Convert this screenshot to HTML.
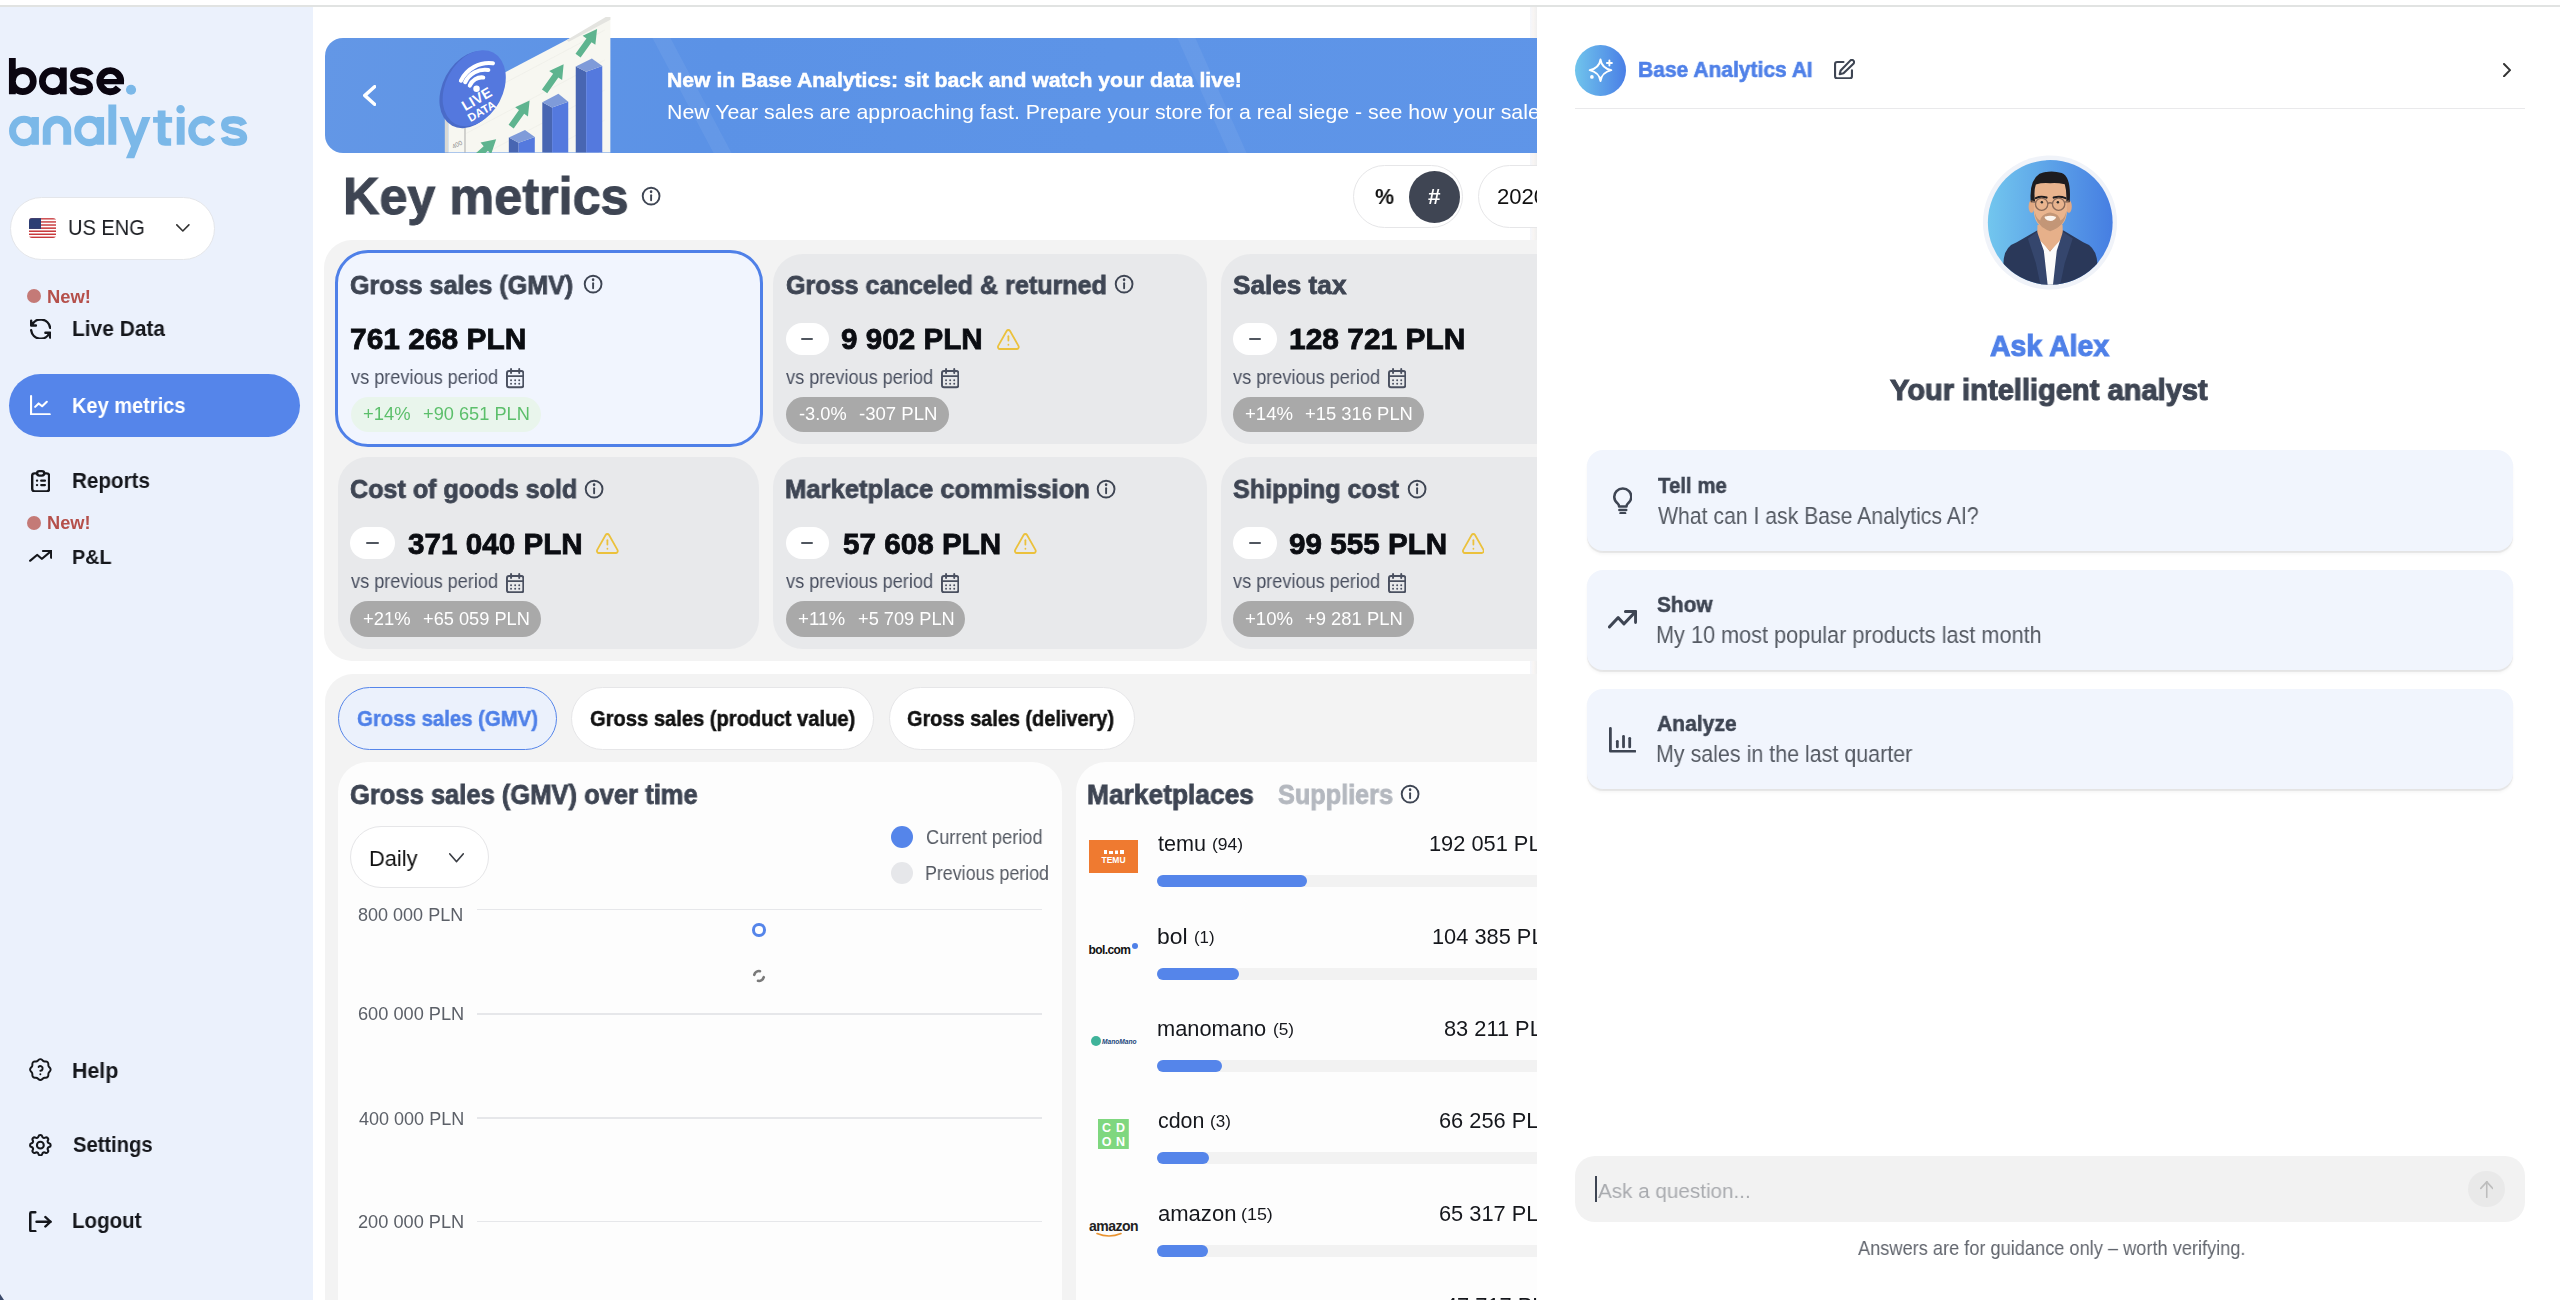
<!DOCTYPE html>
<html><head><meta charset="utf-8"><title>Base Analytics</title>
<style>
html,body{margin:0;padding:0;width:2560px;height:1300px;overflow:hidden;background:#fff;font-family:"Liberation Sans",sans-serif;}
.b{position:absolute;box-sizing:border-box;}
.t{position:absolute;white-space:nowrap;line-height:1;transform-origin:0 0;will-change:transform;}
.clipmain{position:absolute;left:0;top:0;width:1537px;height:1300px;overflow:hidden;}
</style></head><body>
<div class="b" style="left:0px;top:5px;width:2560px;height:2px;background:#e1e3e2"></div>
<div class="b" style="left:0px;top:7px;width:312.5px;height:1293px;background:#ebf1fc"></div>
<svg class="b" style="left:0;top:40px" width="260" height="130" viewBox="0 0 2560 1280"><path d="M88 178H155V535H88z M89 405 a136 137 0 1 1 272 0 a136 137 0 1 1 -272 0z M155 405 a70 71 0 1 0 140 0 a70 71 0 1 0 -140 0z M384 405 a136 137 0 1 1 272 0 a136 137 0 1 1 -272 0z M450 405 a70 71 0 1 0 140 0 a70 71 0 1 0 -140 0z M590 270H657V535H590z " fill="#0a0510" fill-rule="nonzero"/><path d="M892 345 Q872 300 803 300 Q722 300 722 352 Q722 392 800 404 Q885 418 885 470 Q885 512 803 512 Q728 512 712 462" fill="none" stroke="#0a0510" stroke-width="64"/><path d="M1189.0 406.0 A103 104 0 1 0 1167.2 469.4" fill="none" stroke="#0a0510" stroke-width="67"/><path d="M1010 384H1221V436H1010z " fill="#0a0510"/><path d="M1240 490 a50 50 0 1 1 100 0 a50 50 0 1 1 -100 0z " fill="#7bb8e8"/><path d="M89 895 a147 150 0 1 1 294 0 a147 150 0 1 1 -294 0z M158 895 a78 80 0 1 0 156 0 a78 80 0 1 0 -156 0z M310 758H383V1032H310z M731 895 a147 150 0 1 1 294 0 a147 150 0 1 1 -294 0z M800 895 a78 80 0 1 0 156 0 a78 80 0 1 0 -156 0z M952 758H1025V1032H952z M1067 635H1145V1032H1067z M1178 758 L1262 758 L1332 945 L1400 758 L1482 758 L1322 1165 L1240 1165 L1290 1045z M1553 695 H1630 V758 H1695 V815 H1630 V950 Q1630 968 1648 968 H1685 V1040 H1625 Q1553 1040 1553 975 V815 H1507 V758 H1553 Z M1740 758H1818V1032H1740z M1736 682 a42 42 0 1 1 84 0 a42 42 0 1 1 -84 0z " fill="#7bb8e8"/><path d="M460 1032 V885 A101 101 0 0 1 662 885 V1032" fill="none" stroke="#7bb8e8" stroke-width="78"/><path d="M2089.0 830.3 A110 112 0 1 0 2089.0 959.7" fill="none" stroke="#7bb8e8" stroke-width="72"/><path d="M2400 835 Q2380 785 2300 785 Q2212 785 2212 840 Q2212 885 2300 898 Q2398 912 2398 963 Q2398 1008 2305 1008 Q2222 1008 2208 955" fill="none" stroke="#7bb8e8" stroke-width="72"/></svg>
<div class="b" style="left:9.5px;top:196.5px;width:205px;height:63px;background:#fff;border:1.5px solid #e4e6ea;border-radius:32px"></div>
<svg class="b" style="left:29px;top:217.5px;border-radius:3px;overflow:hidden" width="27" height="20.3" viewBox="0 0 27 20"><rect x="0" y="0" width="27" height="1.59" fill="#c8393c"/><rect x="0" y="1.54" width="27" height="1.59" fill="#fff"/><rect x="0" y="3.08" width="27" height="1.59" fill="#c8393c"/><rect x="0" y="4.62" width="27" height="1.59" fill="#fff"/><rect x="0" y="6.15" width="27" height="1.59" fill="#c8393c"/><rect x="0" y="7.69" width="27" height="1.59" fill="#fff"/><rect x="0" y="9.23" width="27" height="1.59" fill="#c8393c"/><rect x="0" y="10.77" width="27" height="1.59" fill="#fff"/><rect x="0" y="12.31" width="27" height="1.59" fill="#c8393c"/><rect x="0" y="13.85" width="27" height="1.59" fill="#fff"/><rect x="0" y="15.38" width="27" height="1.59" fill="#c8393c"/><rect x="0" y="16.92" width="27" height="1.59" fill="#fff"/><rect x="0" y="18.46" width="27" height="1.59" fill="#c8393c"/><rect x="0" y="0" width="12" height="10.77" fill="#2c3e74"/></svg>
<svg class="b" style="left:175.9px;top:223.8px" width="13.7" height="7.8" viewBox="5.2 8.2 13.6 7.6" preserveAspectRatio="none" fill="none" stroke="#333" stroke-width="1.6" stroke-linecap="round" stroke-linejoin="round"><path d="M6 9l6 6l6 -6"/></svg>
<div class="b" style="left:27.3px;top:289.4px;width:14px;height:14px;border-radius:50%;background:#c47a77"></div>
<svg class="b" style="left:30px;top:319.3px" width="21.3" height="20.2" viewBox="3 3.6 18 16.8" preserveAspectRatio="none" fill="none" stroke="#15171c" stroke-width="2" stroke-linecap="round" stroke-linejoin="round"><path d="M20 11a8.1 8.1 0 0 0 -15.5 -2m-.5 -4v4h4"/><path d="M4 13a8.1 8.1 0 0 0 15.5 2m.5 4v-4h-4"/></svg>
<div class="b" style="left:9px;top:373.5px;width:291px;height:63.5px;background:#5585ea;border-radius:32px"></div>
<svg class="b" style="left:30px;top:394.7px" width="20.8" height="20.3" viewBox="3.1 3.1 17.8 17.8" preserveAspectRatio="none" fill="none" stroke="#fff" stroke-width="1.8" stroke-linecap="round" stroke-linejoin="round"><path d="M4 4v16h16"/><path d="M7.5 13.5l3 -3l3 2.5l4 -4"/></svg>
<svg class="b" style="left:31px;top:469.6px" width="19.3" height="22.4" viewBox="4 2 16 20" preserveAspectRatio="none" fill="none" stroke="#15171c" stroke-width="2" stroke-linecap="round" stroke-linejoin="round"><path d="M9 5h-2a2 2 0 0 0 -2 2v12a2 2 0 0 0 2 2h10a2 2 0 0 0 2 -2v-12a2 2 0 0 0 -2 -2h-2"/><path d="M9 5a2 2 0 0 1 2 -2h2a2 2 0 0 1 2 2v0a2 2 0 0 1 -2 2h-2a2 2 0 0 1 -2 -2z"/><path d="M9 11.5l.01 0"/><path d="M12.5 11.5l3 0"/><path d="M9 15.5l.01 0"/><path d="M12.5 15.5l3 0"/></svg>
<div class="b" style="left:26.8px;top:516.3px;width:14px;height:14px;border-radius:50%;background:#c47a77"></div>
<svg class="b" style="left:29.1px;top:550.4px" width="23.4" height="11.8" viewBox="2 6 20 12" preserveAspectRatio="none" fill="none" stroke="#15171c" stroke-width="2" stroke-linecap="round" stroke-linejoin="round"><path d="M3 17l6 -6l4 4l8 -8"/><path d="M14 7l7 0l0 7"/></svg>
<svg class="b" style="left:29px;top:1058.3px" width="22.7" height="23.1" viewBox="2.05 2.05 19.9 19.9" preserveAspectRatio="none" fill="none" stroke="#15171c" stroke-width="1.7" stroke-linecap="round" stroke-linejoin="round"><path d="M5 7.2a2.2 2.2 0 0 1 2.2 -2.2h1a2.2 2.2 0 0 0 1.55 -.64l.7 -.7a2.2 2.2 0 0 1 3.12 0l.7 .7c.412 .41 .97 .64 1.55 .64h1a2.2 2.2 0 0 1 2.2 2.2v1c0 .58 .23 1.138 .64 1.55l.7 .7a2.2 2.2 0 0 1 0 3.12l-.7 .7a2.2 2.2 0 0 0 -.64 1.55v1a2.2 2.2 0 0 1 -2.2 2.2h-1a2.2 2.2 0 0 0 -1.55 .64l-.7 .7a2.2 2.2 0 0 1 -3.12 0l-.7 -.7a2.2 2.2 0 0 0 -1.55 -.64h-1a2.2 2.2 0 0 1 -2.2 -2.2v-1a2.2 2.2 0 0 0 -.64 -1.55l-.7 -.7a2.2 2.2 0 0 1 0 -3.12l.7 -.7a2.2 2.2 0 0 0 .64 -1.55v-1"/><path d="M12 16v.01"/><path d="M12 13a2 2 0 0 0 .914 -3.782a1.98 1.98 0 0 0 -2.414 .483"/></svg>
<svg class="b" style="left:29px;top:1133.7px" width="22.7" height="22.4" viewBox="2.1 2.1 19.8 19.8" preserveAspectRatio="none" fill="none" stroke="#15171c" stroke-width="1.8" stroke-linecap="round" stroke-linejoin="round"><path d="M10.325 4.317c.426 -1.756 2.924 -1.756 3.35 0a1.724 1.724 0 0 0 2.573 1.066c1.543 -.94 3.31 .826 2.37 2.37a1.724 1.724 0 0 0 1.065 2.572c1.756 .426 1.756 2.924 0 3.35a1.724 1.724 0 0 0 -1.066 2.573c.94 1.543 -.826 3.31 -2.37 2.37a1.724 1.724 0 0 0 -2.572 1.065c-.426 1.756 -2.924 1.756 -3.35 0a1.724 1.724 0 0 0 -2.573 -1.066c-1.543 .94 -3.31 -.826 -2.37 -2.37a1.724 1.724 0 0 0 -1.065 -2.572c-1.756 -.426 -1.756 -2.924 0 -3.35a1.724 1.724 0 0 0 1.066 -2.573c-.94 -1.543 .826 -3.31 2.37 -2.37c1 .608 2.296 .07 2.572 -1.065z"/><path d="M9 12a3 3 0 1 0 6 0a3 3 0 0 0 -6 0"/></svg>
<svg class="b" style="left:29px;top:1210.6px" width="22.7" height="21.5" viewBox="3.5 3 18 18" preserveAspectRatio="none" fill="none" stroke="#15171c" stroke-width="2" stroke-linecap="round" stroke-linejoin="round"><path d="M8.5 4h-3a1 1 0 0 0 -1 1v14a1 1 0 0 0 1 1h3"/><path d="M9.5 12h11"/><path d="M16.5 8l4 4l-4 4"/></svg>
<span class="t" style="left:68.04px;top:217px;font-size:21.8px;font-weight:normal;color:#1b1d22;font-family:'Liberation Sans',sans-serif;transform:scaleX(0.92);">US ENG</span>
<span class="t" style="left:46.55px;top:288px;font-size:18.02px;font-weight:bold;color:#b5504b;font-family:'Liberation Sans',sans-serif;transform:scaleX(1.02);">New!</span>
<span class="t" style="left:71.89px;top:318px;font-size:21.8px;font-weight:bold;color:#15171c;font-family:'Liberation Sans',sans-serif;transform:scaleX(0.96);">Live Data</span>
<span class="t" style="left:71.55px;top:395px;font-size:22.24px;font-weight:bold;color:#fff;font-family:'Liberation Sans',sans-serif;transform:scaleX(0.9);">Key metrics</span>
<span class="t" style="left:71.5px;top:471px;font-size:21.51px;font-weight:bold;color:#15171c;font-family:'Liberation Sans',sans-serif;transform:scaleX(0.96);">Reports</span>
<span class="t" style="left:46.76px;top:515px;font-size:17.88px;font-weight:bold;color:#b5504b;font-family:'Liberation Sans',sans-serif;transform:scaleX(1.02);">New!</span>
<span class="t" style="left:71.56px;top:546px;font-size:21.08px;font-weight:bold;color:#15171c;font-family:'Liberation Sans',sans-serif;transform:scaleX(0.94);">P&amp;L</span>
<span class="t" style="left:71.87px;top:1060px;font-size:21.8px;font-weight:bold;color:#15171c;font-family:'Liberation Sans',sans-serif;transform:scaleX(0.98);">Help</span>
<span class="t" style="left:72.88px;top:1134px;font-size:21.22px;font-weight:bold;color:#15171c;font-family:'Liberation Sans',sans-serif;transform:scaleX(0.95);">Settings</span>
<span class="t" style="left:71.92px;top:1210px;font-size:21.8px;font-weight:bold;color:#15171c;font-family:'Liberation Sans',sans-serif;transform:scaleX(0.94);">Logout</span>
<div class="b" style="left:312.5px;top:7px;width:1224.5px;height:1293px;background:#fff"></div>
<div class="b" style="left:1530px;top:7px;width:7px;height:1293px;background:linear-gradient(90deg,#f4f6fb,#f8f5f3 50%,#efefef)"></div>
<div class="b" style="left:324.5px;top:38.3px;width:1300px;height:114.5px;border-radius:18px;overflow:hidden;background:linear-gradient(100deg,#6397e6 0%,#5b92e6 30%,#5d94e7 60%,#5f95e8 100%)"><div style="position:absolute;left:358px;top:0;width:18px;height:115px;transform:skewX(28deg);background:rgba(255,255,255,0.06)"></div><div style="position:absolute;left:878px;top:0;width:18px;height:115px;transform:skewX(24deg);background:rgba(255,255,255,0.06)"></div></div>
<svg class="b" style="left:362.5px;top:85px" width="13.5" height="21" viewBox="7.9 4.9 8.2 14.2" preserveAspectRatio="none" fill="none" stroke="#fff" stroke-width="2.2" stroke-linecap="round" stroke-linejoin="round"><path d="M15 6l-6 6l6 6"/></svg>
<svg class="b" style="left:420px;top:10px" width="220" height="142.5" viewBox="0 0 1907 1235"><polygon points="215,818 245,800 245,1235 215,1235" fill="#d8d8d4"/><polygon points="245,800 1650,60 1650,1235 245,1235" fill="#f7f7f1"/><polygon points="1270,262 1610,60 1650,60 1650,85 1290,275" fill="#e4e4e0"/><line x1="400" y1="810" x2="1600" y2="175" stroke="#e9e9e2" stroke-width="4"/><line x1="400" y1="1070" x2="1600" y2="435" stroke="#e9e9e2" stroke-width="4"/><line x1="400" y1="1330" x2="1600" y2="695" stroke="#e9e9e2" stroke-width="4"/><line x1="400" y1="1590" x2="1600" y2="955" stroke="#e9e9e2" stroke-width="4"/><line x1="400" y1="1850" x2="1600" y2="1215" stroke="#e9e9e2" stroke-width="4"/><line x1="390" y1="990" x2="390" y2="1235" stroke="#9a9a9a" stroke-width="7"/><text x="0" y="0" transform="translate(290,1205) rotate(-28)" font-family="Liberation Sans" font-size="55" fill="#8c8c8c">400</text><polygon points="770,1105 855,1150 855,1235 770,1235" fill="#4866b2"/><polygon points="855,1150 995,1100 995,1235 855,1235" fill="#5479de"/><polygon points="1060,800 1145,845 1145,1235 1060,1235" fill="#4866b2"/><polygon points="1145,845 1285,795 1285,1235 1145,1235" fill="#5479de"/><polygon points="1350,490 1440,535 1440,1235 1350,1235" fill="#4866b2"/><polygon points="1440,535 1580,485 1580,1235 1440,1235" fill="#5479de"/><polygon points="770,1105 910,1040 995,1100 855,1150" fill="#7f9bd9"/><polygon points="1060,800 1200,725 1285,795 1145,845" fill="#7f9bd9"/><polygon points="1350,490 1490,420 1580,485 1440,535" fill="#7f9bd9"/><polygon points="488,1310 589,1221 616,1251 660,1120 525,1149 552,1180 452,1270" fill="#5eb48f"/><polygon points="812,1026 903,899 936,922 950,785 825,843 858,867 768,994" fill="#5eb48f"/><polygon points="1103,721 1199,584 1232,607 1245,470 1120,529 1154,552 1057,689" fill="#5eb48f"/><polygon points="1392,411 1487,279 1520,302 1535,165 1410,223 1443,246 1348,379" fill="#5eb48f"/><ellipse cx="445" cy="690" rx="250" ry="355" transform="rotate(28 445 690)" fill="#4a6bc8"/><ellipse cx="470" cy="678" rx="248" ry="350" transform="rotate(28 470 678)" fill="#5478de"/><g fill="none" stroke="#fff" stroke-width="36" stroke-linecap="round"><path d="M432 655 A110 110 0 0 1 548 585"/><path d="M392 625 A190 190 0 0 1 592 520"/><path d="M355 612 A270 270 0 0 1 632 462"/></g><circle cx="490" cy="682" r="28" fill="#fff"/><g transform="translate(392,878) rotate(-30)" font-family="Liberation Sans" font-weight="bold" fill="#fff"><text x="0" y="0" font-size="125">LIVE</text><text x="-8" y="105" font-size="100">DATA</text></g></svg>
<span class="t" style="left:666.88px;top:70px;font-size:20.78px;font-weight:bold;color:#fff;font-family:'Liberation Sans',sans-serif;transform:scaleX(1.02);-webkit-text-stroke:0.5px #fff;">New in Base Analytics: sit back and watch your data live!</span>
<span class="t" style="left:667.09px;top:102px;font-size:20.49px;font-weight:normal;color:#fff;font-family:'Liberation Sans',sans-serif;transform:scaleX(1.04);">New Year sales are approaching fast. Prepare your store for a real siege - see how your sales are going live!</span>
<svg class="b" style="left:640.49px;top:184.99px" width="22.22" height="22.22" viewBox="-12 -12 24 24" fill="none" stroke="#3e4553" stroke-width="2.05" stroke-linecap="round"><circle cx="0" cy="0" r="9.07"/><path d="M0 -1v5.5"/><path d="M0 -4.8v0.2" stroke-width="2.81"/></svg>
<div class="b" style="left:1353.3px;top:164.8px;width:110.1px;height:62.9px;background:#fff;border:1.2px solid #e6e6e8;border-radius:32px"></div>
<div class="b" style="left:1408.6px;top:170.5px;width:51px;height:52px;border-radius:50%;background:#3f4553"></div>
<div class="b" style="left:1477.5px;top:164.8px;width:200px;height:62.9px;background:#fff;border:1.2px solid #e6e6e8;border-radius:32px"></div>
<span class="t" style="left:343.36px;top:170px;font-size:52.47px;font-weight:bold;color:#3e4553;font-family:'Liberation Sans',sans-serif;transform:scaleX(0.96);-webkit-text-stroke:1px #3e4553;">Key metrics</span>
<span class="t" style="left:1374.86px;top:186px;font-size:22.09px;font-weight:bold;color:#111;font-family:'Liberation Sans',sans-serif;transform:scaleX(0.97);">%</span>
<span class="t" style="left:1427.96px;top:186px;font-size:22.53px;font-weight:bold;color:#fff;font-family:'Liberation Sans',sans-serif;transform:scaleX(0.98);">#</span>
<span class="t" style="left:1496.76px;top:186px;font-size:22.09px;font-weight:normal;color:#111;font-family:'Liberation Sans',sans-serif;">2020-12-01 - 2020-12-31</span>
<div class="b" style="left:324.4px;top:239.9px;width:1300px;height:421.5px;background:#f3f3f3;border-radius:28px"></div>
<div class="b" style="left:334.7px;top:250.1px;width:428.1px;height:196.7px;background:#f1f5fe;border:3px solid #4f80e8;border-radius:33px"></div>
<svg class="b" style="left:581.89px;top:273.39px" width="22.22" height="22.22" viewBox="-12 -12 24 24" fill="none" stroke="#3e4553" stroke-width="2.05" stroke-linecap="round"><circle cx="0" cy="0" r="9.07"/><path d="M0 -1v5.5"/><path d="M0 -4.8v0.2" stroke-width="2.81"/></svg>
<svg class="b" style="left:505.6px;top:368.3px" width="18.3" height="20.3" viewBox="3.05 2.05 17.9 19.9" preserveAspectRatio="none" fill="none" stroke="#4a5060" stroke-width="1.9" stroke-linecap="round" stroke-linejoin="round"><path d="M4 7a2 2 0 0 1 2 -2h12a2 2 0 0 1 2 2v12a2 2 0 0 1 -2 2h-12a2 2 0 0 1 -2 -2v-12z"/><path d="M16 3v4"/><path d="M8 3v4"/><path d="M4 10h16"/><path d="M8 14v.01"/><path d="M12 14v.01"/><path d="M16 14v.01"/><path d="M8 17.5v.01"/><path d="M12 17.5v.01"/><path d="M16 17.5v.01"/></svg>
<div class="b" style="left:350.9px;top:396.9px;width:189.9px;height:35.3px;background:#e9f5ec;border-radius:18px"></div>
<span class="t" style="left:350.11px;top:272px;font-size:26.16px;font-weight:bold;color:#3e4553;font-family:'Liberation Sans',sans-serif;transform:scaleX(0.96);-webkit-text-stroke:0.8px #3e4553;">Gross sales (GMV)</span>
<span class="t" style="left:349.76px;top:324px;font-size:29.65px;font-weight:bold;color:#0b0d12;font-family:'Liberation Sans',sans-serif;transform:scaleX(1.01);-webkit-text-stroke:0.8px #0b0d12;">761 268 PLN</span>
<span class="t" style="left:350.9px;top:368px;font-size:19.3px;font-weight:normal;color:#4a5060;font-family:'Liberation Sans',sans-serif;transform:scaleX(0.94);">vs previous period</span>
<span class="t" style="left:362.94px;top:406px;font-size:17.88px;font-weight:normal;color:#5cbf6b;font-family:'Liberation Sans',sans-serif;transform:scaleX(1.03);">+14%</span>
<span class="t" style="left:422.54px;top:406px;font-size:17.88px;font-weight:normal;color:#5cbf6b;font-family:'Liberation Sans',sans-serif;transform:scaleX(1.02);">+90 651 PLN</span>
<div class="b" style="left:772.8px;top:253.8px;width:434.4px;height:190px;background:#e8e9eb;border-radius:30px"></div>
<svg class="b" style="left:1113.09px;top:273.39px" width="22.22" height="22.22" viewBox="-12 -12 24 24" fill="none" stroke="#3e4553" stroke-width="2.05" stroke-linecap="round"><circle cx="0" cy="0" r="9.07"/><path d="M0 -1v5.5"/><path d="M0 -4.8v0.2" stroke-width="2.81"/></svg>
<div class="b" style="left:785.5px;top:322.9px;width:43.4px;height:31.7px;background:#fff;border-radius:16px"></div>
<div class="b" style="left:801.1px;top:337.9px;width:12.2px;height:1.7px;background:#50565f;border-radius:1px"></div>
<svg class="b" style="left:996.8px;top:328.6px" width="22.8" height="21" viewBox="0.6 2.1 22.8 19.8" preserveAspectRatio="none" fill="none" stroke="#ebc13c" stroke-width="1.8" stroke-linecap="round" stroke-linejoin="round"><path d="M10.24 3.957l-8.422 14.06a1.989 1.989 0 0 0 1.7 2.983h16.845a1.989 1.989 0 0 0 1.7 -2.983l-8.423 -14.06a1.989 1.989 0 0 0 -3.4 0z"/><path d="M12 9v4"/><path d="M12 17h.01"/></svg>
<svg class="b" style="left:941.1px;top:368.3px" width="18.3" height="20.3" viewBox="3.05 2.05 17.9 19.9" preserveAspectRatio="none" fill="none" stroke="#4a5060" stroke-width="1.9" stroke-linecap="round" stroke-linejoin="round"><path d="M4 7a2 2 0 0 1 2 -2h12a2 2 0 0 1 2 2v12a2 2 0 0 1 -2 2h-12a2 2 0 0 1 -2 -2v-12z"/><path d="M16 3v4"/><path d="M8 3v4"/><path d="M4 10h16"/><path d="M8 14v.01"/><path d="M12 14v.01"/><path d="M16 14v.01"/><path d="M8 17.5v.01"/><path d="M12 17.5v.01"/><path d="M16 17.5v.01"/></svg>
<div class="b" style="left:785.9px;top:396.9px;width:163.1px;height:35.3px;background:#a9a9a9;border-radius:18px"></div>
<span class="t" style="left:785.61px;top:272px;font-size:26.16px;font-weight:bold;color:#3e4553;font-family:'Liberation Sans',sans-serif;transform:scaleX(0.96);-webkit-text-stroke:0.8px #3e4553;">Gross canceled &amp; returned</span>
<span class="t" style="left:841.47px;top:324px;font-size:29.65px;font-weight:bold;color:#0b0d12;font-family:'Liberation Sans',sans-serif;transform:scaleX(1);-webkit-text-stroke:0.8px #0b0d12;">9 902 PLN</span>
<span class="t" style="left:786.4px;top:368px;font-size:19.3px;font-weight:normal;color:#4a5060;font-family:'Liberation Sans',sans-serif;transform:scaleX(0.94);">vs previous period</span>
<span class="t" style="left:798.73px;top:406px;font-size:17.88px;font-weight:normal;color:#fff;font-family:'Liberation Sans',sans-serif;transform:scaleX(1.02);">-3.0%</span>
<span class="t" style="left:859.42px;top:406px;font-size:17.88px;font-weight:normal;color:#fff;font-family:'Liberation Sans',sans-serif;transform:scaleX(1.04);">-307 PLN</span>
<div class="b" style="left:1220.6px;top:253.8px;width:479.4px;height:190px;background:#e8e9eb;border-radius:30px"></div>
<div class="b" style="left:1233px;top:322.9px;width:43.6px;height:31.7px;background:#fff;border-radius:16px"></div>
<div class="b" style="left:1248.7px;top:337.9px;width:12.2px;height:1.7px;background:#50565f;border-radius:1px"></div>
<svg class="b" style="left:1388px;top:368.3px" width="18.3" height="20.3" viewBox="3.05 2.05 17.9 19.9" preserveAspectRatio="none" fill="none" stroke="#4a5060" stroke-width="1.9" stroke-linecap="round" stroke-linejoin="round"><path d="M4 7a2 2 0 0 1 2 -2h12a2 2 0 0 1 2 2v12a2 2 0 0 1 -2 2h-12a2 2 0 0 1 -2 -2v-12z"/><path d="M16 3v4"/><path d="M8 3v4"/><path d="M4 10h16"/><path d="M8 14v.01"/><path d="M12 14v.01"/><path d="M16 14v.01"/><path d="M8 17.5v.01"/><path d="M12 17.5v.01"/><path d="M16 17.5v.01"/></svg>
<div class="b" style="left:1232.8px;top:396.9px;width:191.5px;height:35.3px;background:#a9a9a9;border-radius:18px"></div>
<span class="t" style="left:1232.89px;top:272px;font-size:26.16px;font-weight:bold;color:#3e4553;font-family:'Liberation Sans',sans-serif;transform:scaleX(1);-webkit-text-stroke:0.8px #3e4553;">Sales tax</span>
<span class="t" style="left:1289.33px;top:324px;font-size:29.65px;font-weight:bold;color:#0b0d12;font-family:'Liberation Sans',sans-serif;transform:scaleX(1.01);-webkit-text-stroke:0.8px #0b0d12;">128 721 PLN</span>
<span class="t" style="left:1233.3px;top:368px;font-size:19.3px;font-weight:normal;color:#4a5060;font-family:'Liberation Sans',sans-serif;transform:scaleX(0.94);">vs previous period</span>
<span class="t" style="left:1245.33px;top:406px;font-size:17.88px;font-weight:normal;color:#fff;font-family:'Liberation Sans',sans-serif;transform:scaleX(1.04);">+14%</span>
<span class="t" style="left:1304.84px;top:406px;font-size:17.88px;font-weight:normal;color:#fff;font-family:'Liberation Sans',sans-serif;transform:scaleX(1.03);">+15 316 PLN</span>
<div class="b" style="left:337.8px;top:456.5px;width:421.7px;height:192.1px;background:#e8e9eb;border-radius:30px"></div>
<svg class="b" style="left:583.09px;top:477.79px" width="22.22" height="22.22" viewBox="-12 -12 24 24" fill="none" stroke="#3e4553" stroke-width="2.05" stroke-linecap="round"><circle cx="0" cy="0" r="9.07"/><path d="M0 -1v5.5"/><path d="M0 -4.8v0.2" stroke-width="2.81"/></svg>
<div class="b" style="left:350.2px;top:527.3px;width:44.5px;height:31.7px;background:#fff;border-radius:16px"></div>
<div class="b" style="left:366.35px;top:542.3px;width:12.2px;height:1.7px;background:#50565f;border-radius:1px"></div>
<svg class="b" style="left:595.8px;top:533px" width="22.8" height="21" viewBox="0.6 2.1 22.8 19.8" preserveAspectRatio="none" fill="none" stroke="#ebc13c" stroke-width="1.8" stroke-linecap="round" stroke-linejoin="round"><path d="M10.24 3.957l-8.422 14.06a1.989 1.989 0 0 0 1.7 2.983h16.845a1.989 1.989 0 0 0 1.7 -2.983l-8.423 -14.06a1.989 1.989 0 0 0 -3.4 0z"/><path d="M12 9v4"/><path d="M12 17h.01"/></svg>
<svg class="b" style="left:505.6px;top:572.7px" width="18.3" height="20.3" viewBox="3.05 2.05 17.9 19.9" preserveAspectRatio="none" fill="none" stroke="#4a5060" stroke-width="1.9" stroke-linecap="round" stroke-linejoin="round"><path d="M4 7a2 2 0 0 1 2 -2h12a2 2 0 0 1 2 2v12a2 2 0 0 1 -2 2h-12a2 2 0 0 1 -2 -2v-12z"/><path d="M16 3v4"/><path d="M8 3v4"/><path d="M4 10h16"/><path d="M8 14v.01"/><path d="M12 14v.01"/><path d="M16 14v.01"/><path d="M8 17.5v.01"/><path d="M12 17.5v.01"/><path d="M16 17.5v.01"/></svg>
<div class="b" style="left:350.4px;top:601.3px;width:190.5px;height:35.3px;background:#a9a9a9;border-radius:18px"></div>
<span class="t" style="left:350.12px;top:476px;font-size:26.16px;font-weight:bold;color:#3e4553;font-family:'Liberation Sans',sans-serif;transform:scaleX(0.96);-webkit-text-stroke:0.8px #3e4553;">Cost of goods sold</span>
<span class="t" style="left:407.74px;top:529px;font-size:29.65px;font-weight:bold;color:#0b0d12;font-family:'Liberation Sans',sans-serif;transform:scaleX(1);-webkit-text-stroke:0.8px #0b0d12;">371 040 PLN</span>
<span class="t" style="left:350.9px;top:572px;font-size:19.3px;font-weight:normal;color:#4a5060;font-family:'Liberation Sans',sans-serif;transform:scaleX(0.94);">vs previous period</span>
<span class="t" style="left:362.94px;top:611px;font-size:17.88px;font-weight:normal;color:#fff;font-family:'Liberation Sans',sans-serif;transform:scaleX(1.03);">+21%</span>
<span class="t" style="left:423.15px;top:611px;font-size:17.88px;font-weight:normal;color:#fff;font-family:'Liberation Sans',sans-serif;transform:scaleX(1.02);">+65 059 PLN</span>
<div class="b" style="left:772.8px;top:456.5px;width:434.4px;height:192.1px;background:#e8e9eb;border-radius:30px"></div>
<svg class="b" style="left:1094.59px;top:477.79px" width="22.22" height="22.22" viewBox="-12 -12 24 24" fill="none" stroke="#3e4553" stroke-width="2.05" stroke-linecap="round"><circle cx="0" cy="0" r="9.07"/><path d="M0 -1v5.5"/><path d="M0 -4.8v0.2" stroke-width="2.81"/></svg>
<div class="b" style="left:785.5px;top:527.3px;width:43.4px;height:31.7px;background:#fff;border-radius:16px"></div>
<div class="b" style="left:801.1px;top:542.3px;width:12.2px;height:1.7px;background:#50565f;border-radius:1px"></div>
<svg class="b" style="left:1014.3px;top:533px" width="22.8" height="21" viewBox="0.6 2.1 22.8 19.8" preserveAspectRatio="none" fill="none" stroke="#ebc13c" stroke-width="1.8" stroke-linecap="round" stroke-linejoin="round"><path d="M10.24 3.957l-8.422 14.06a1.989 1.989 0 0 0 1.7 2.983h16.845a1.989 1.989 0 0 0 1.7 -2.983l-8.423 -14.06a1.989 1.989 0 0 0 -3.4 0z"/><path d="M12 9v4"/><path d="M12 17h.01"/></svg>
<svg class="b" style="left:941.1px;top:572.7px" width="18.3" height="20.3" viewBox="3.05 2.05 17.9 19.9" preserveAspectRatio="none" fill="none" stroke="#4a5060" stroke-width="1.9" stroke-linecap="round" stroke-linejoin="round"><path d="M4 7a2 2 0 0 1 2 -2h12a2 2 0 0 1 2 2v12a2 2 0 0 1 -2 2h-12a2 2 0 0 1 -2 -2v-12z"/><path d="M16 3v4"/><path d="M8 3v4"/><path d="M4 10h16"/><path d="M8 14v.01"/><path d="M12 14v.01"/><path d="M16 14v.01"/><path d="M8 17.5v.01"/><path d="M12 17.5v.01"/><path d="M16 17.5v.01"/></svg>
<div class="b" style="left:785.9px;top:601.3px;width:179.6px;height:35.3px;background:#a9a9a9;border-radius:18px"></div>
<span class="t" style="left:784.8px;top:476px;font-size:26.16px;font-weight:bold;color:#3e4553;font-family:'Liberation Sans',sans-serif;transform:scaleX(0.98);-webkit-text-stroke:0.8px #3e4553;">Marketplace commission</span>
<span class="t" style="left:842.54px;top:529px;font-size:29.65px;font-weight:bold;color:#0b0d12;font-family:'Liberation Sans',sans-serif;-webkit-text-stroke:0.8px #0b0d12;">57 608 PLN</span>
<span class="t" style="left:786.4px;top:572px;font-size:19.3px;font-weight:normal;color:#4a5060;font-family:'Liberation Sans',sans-serif;transform:scaleX(0.94);">vs previous period</span>
<span class="t" style="left:798.42px;top:611px;font-size:17.88px;font-weight:normal;color:#fff;font-family:'Liberation Sans',sans-serif;transform:scaleX(1.05);">+11%</span>
<span class="t" style="left:857.95px;top:611px;font-size:17.88px;font-weight:normal;color:#fff;font-family:'Liberation Sans',sans-serif;transform:scaleX(1.02);">+5 709 PLN</span>
<div class="b" style="left:1220.6px;top:456.5px;width:479.4px;height:192.1px;background:#e8e9eb;border-radius:30px"></div>
<svg class="b" style="left:1406.09px;top:477.79px" width="22.22" height="22.22" viewBox="-12 -12 24 24" fill="none" stroke="#3e4553" stroke-width="2.05" stroke-linecap="round"><circle cx="0" cy="0" r="9.07"/><path d="M0 -1v5.5"/><path d="M0 -4.8v0.2" stroke-width="2.81"/></svg>
<div class="b" style="left:1233px;top:527.3px;width:43.6px;height:31.7px;background:#fff;border-radius:16px"></div>
<div class="b" style="left:1248.7px;top:542.3px;width:12.2px;height:1.7px;background:#50565f;border-radius:1px"></div>
<svg class="b" style="left:1461.5px;top:533px" width="22.8" height="21" viewBox="0.6 2.1 22.8 19.8" preserveAspectRatio="none" fill="none" stroke="#ebc13c" stroke-width="1.8" stroke-linecap="round" stroke-linejoin="round"><path d="M10.24 3.957l-8.422 14.06a1.989 1.989 0 0 0 1.7 2.983h16.845a1.989 1.989 0 0 0 1.7 -2.983l-8.423 -14.06a1.989 1.989 0 0 0 -3.4 0z"/><path d="M12 9v4"/><path d="M12 17h.01"/></svg>
<svg class="b" style="left:1388px;top:572.7px" width="18.3" height="20.3" viewBox="3.05 2.05 17.9 19.9" preserveAspectRatio="none" fill="none" stroke="#4a5060" stroke-width="1.9" stroke-linecap="round" stroke-linejoin="round"><path d="M4 7a2 2 0 0 1 2 -2h12a2 2 0 0 1 2 2v12a2 2 0 0 1 -2 2h-12a2 2 0 0 1 -2 -2v-12z"/><path d="M16 3v4"/><path d="M8 3v4"/><path d="M4 10h16"/><path d="M8 14v.01"/><path d="M12 14v.01"/><path d="M16 14v.01"/><path d="M8 17.5v.01"/><path d="M12 17.5v.01"/><path d="M16 17.5v.01"/></svg>
<div class="b" style="left:1232.8px;top:601.3px;width:181.2px;height:35.3px;background:#a9a9a9;border-radius:18px"></div>
<span class="t" style="left:1232.91px;top:476px;font-size:26.16px;font-weight:bold;color:#3e4553;font-family:'Liberation Sans',sans-serif;transform:scaleX(0.96);-webkit-text-stroke:0.8px #3e4553;">Shipping cost</span>
<span class="t" style="left:1289.27px;top:529px;font-size:29.65px;font-weight:bold;color:#0b0d12;font-family:'Liberation Sans',sans-serif;transform:scaleX(1);-webkit-text-stroke:0.8px #0b0d12;">99 555 PLN</span>
<span class="t" style="left:1233.3px;top:572px;font-size:19.3px;font-weight:normal;color:#4a5060;font-family:'Liberation Sans',sans-serif;transform:scaleX(0.94);">vs previous period</span>
<span class="t" style="left:1245.33px;top:611px;font-size:17.88px;font-weight:normal;color:#fff;font-family:'Liberation Sans',sans-serif;transform:scaleX(1.04);">+10%</span>
<span class="t" style="left:1304.84px;top:611px;font-size:17.88px;font-weight:normal;color:#fff;font-family:'Liberation Sans',sans-serif;transform:scaleX(1.03);">+9 281 PLN</span>
<div class="b" style="left:324.5px;top:673.8px;width:1300px;height:700px;background:#f3f3f3;border-radius:28px"></div>
<div class="b" style="left:337.8px;top:687px;width:219.2px;height:62.8px;background:#ebf1fc;border:1.5px solid #5585ea;border-radius:32px"></div>
<div class="b" style="left:570.8px;top:687px;width:303px;height:62.8px;background:#fff;border:1.2px solid #e6e6e8;border-radius:32px"></div>
<div class="b" style="left:888.6px;top:687px;width:246px;height:62.8px;background:#fff;border:1.2px solid #e6e6e8;border-radius:32px"></div>
<span class="t" style="left:356.87px;top:708px;font-size:22.38px;font-weight:bold;color:#4f80e8;font-family:'Liberation Sans',sans-serif;transform:scaleX(0.91);-webkit-text-stroke:0.5px #4f80e8;">Gross sales (GMV)</span>
<span class="t" style="left:589.57px;top:708px;font-size:22.38px;font-weight:bold;color:#111;font-family:'Liberation Sans',sans-serif;transform:scaleX(0.9);-webkit-text-stroke:0.5px #111;">Gross sales (product value)</span>
<span class="t" style="left:907.38px;top:708px;font-size:22.38px;font-weight:bold;color:#111;font-family:'Liberation Sans',sans-serif;transform:scaleX(0.89);-webkit-text-stroke:0.5px #111;">Gross sales (delivery)</span>
<div class="b" style="left:337.8px;top:762.2px;width:724.5px;height:700px;background:#fdfdfd;border-radius:30px"></div>
<div class="b" style="left:350px;top:826px;width:138.6px;height:62.3px;background:#fff;border:1.2px solid #e6e6e8;border-radius:32px"></div>
<svg class="b" style="left:449px;top:853px" width="15" height="9.5" viewBox="5.35 8.35 13.3 7.3" preserveAspectRatio="none" fill="none" stroke="#3a3d44" stroke-width="1.3" stroke-linecap="round" stroke-linejoin="round"><path d="M6 9l6 6l6 -6"/></svg>
<div class="b" style="left:891.2px;top:826px;width:22px;height:22px;border-radius:50%;background:#5585ea"></div>
<div class="b" style="left:891.2px;top:862px;width:22px;height:22px;border-radius:50%;background:#e6e7ea"></div>
<div class="b" style="left:476.6px;top:908.85px;width:565px;height:1.5px;background:#e6e7ea"></div>
<div class="b" style="left:476.6px;top:1013.25px;width:565px;height:1.5px;background:#e6e7ea"></div>
<div class="b" style="left:476.6px;top:1117.05px;width:565px;height:1.5px;background:#e6e7ea"></div>
<div class="b" style="left:476.6px;top:1220.95px;width:565px;height:1.5px;background:#e6e7ea"></div>
<div class="b" style="left:752.3px;top:923.3px;width:13.4px;height:13.4px;border-radius:50%;border:3.3px solid #5585ea;background:#fff"></div>
<svg class="b" style="left:751px;top:968px" width="16" height="16" viewBox="-8 -8 16 16" fill="none" stroke="#7a7a7a" stroke-width="2.6" stroke-linecap="round"><path d="M-4.8 -1.2a5 5 0 0 1 5.8 -3.6"/><path d="M4.8 1.2a5 5 0 0 1 -5.8 3.6"/></svg>
<span class="t" style="left:350px;top:782px;font-size:26.89px;font-weight:bold;color:#3e4553;font-family:'Liberation Sans',sans-serif;transform:scaleX(0.95);-webkit-text-stroke:0.8px #3e4553;">Gross sales (GMV) over time</span>
<span class="t" style="left:369.09px;top:848px;font-size:22.53px;font-weight:normal;color:#111;font-family:'Liberation Sans',sans-serif;transform:scaleX(0.97);">Daily</span>
<span class="t" style="left:925.95px;top:828px;font-size:19.62px;font-weight:normal;color:#555a63;font-family:'Liberation Sans',sans-serif;transform:scaleX(0.93);">Current period</span>
<span class="t" style="left:925.4px;top:864px;font-size:19.62px;font-weight:normal;color:#555a63;font-family:'Liberation Sans',sans-serif;transform:scaleX(0.91);">Previous period</span>
<span class="t" style="left:358.44px;top:906px;font-size:18.02px;font-weight:normal;color:#5c6068;font-family:'Liberation Sans',sans-serif;transform:scaleX(1);">800 000 PLN</span>
<span class="t" style="left:358.15px;top:1005px;font-size:18.02px;font-weight:normal;color:#5c6068;font-family:'Liberation Sans',sans-serif;transform:scaleX(1.01);">600 000 PLN</span>
<span class="t" style="left:358.72px;top:1110px;font-size:18.02px;font-weight:normal;color:#5c6068;font-family:'Liberation Sans',sans-serif;">400 000 PLN</span>
<span class="t" style="left:358.15px;top:1213px;font-size:18.02px;font-weight:normal;color:#5c6068;font-family:'Liberation Sans',sans-serif;transform:scaleX(1.01);">200 000 PLN</span>
<div class="b" style="left:1075.5px;top:761.5px;width:700px;height:700px;background:#fdfdfd;border-radius:30px"></div>
<svg class="b" style="left:1398.89px;top:783.39px" width="22.22" height="22.22" viewBox="-12 -12 24 24" fill="none" stroke="#3e4553" stroke-width="2.05" stroke-linecap="round"><circle cx="0" cy="0" r="9.07"/><path d="M0 -1v5.5"/><path d="M0 -4.8v0.2" stroke-width="2.81"/></svg>
<div class="b" style="left:1157px;top:875px;width:600px;height:12px;background:#f2f2f2;border-radius:6px"></div>
<div class="b" style="left:1157px;top:875px;width:150px;height:12px;background:#5585ea;border-radius:6px"></div>
<div class="b" style="left:1157px;top:967.6px;width:600px;height:12px;background:#f2f2f2;border-radius:6px"></div>
<div class="b" style="left:1157px;top:967.6px;width:81.5px;height:12px;background:#5585ea;border-radius:6px"></div>
<div class="b" style="left:1157px;top:1059.8px;width:600px;height:12px;background:#f2f2f2;border-radius:6px"></div>
<div class="b" style="left:1157px;top:1059.8px;width:65px;height:12px;background:#5585ea;border-radius:6px"></div>
<div class="b" style="left:1157px;top:1152.2px;width:600px;height:12px;background:#f2f2f2;border-radius:6px"></div>
<div class="b" style="left:1157px;top:1152.2px;width:51.8px;height:12px;background:#5585ea;border-radius:6px"></div>
<div class="b" style="left:1157px;top:1244.9px;width:600px;height:12px;background:#f2f2f2;border-radius:6px"></div>
<div class="b" style="left:1157px;top:1244.9px;width:51.1px;height:12px;background:#5585ea;border-radius:6px"></div>
<div class="b" style="left:1157px;top:1337.4px;width:600px;height:12px;background:#f2f2f2;border-radius:6px"></div>
<div class="b" style="left:1157px;top:1337.4px;width:33px;height:12px;background:#5585ea;border-radius:6px"></div>
<span class="t" style="left:1086.66px;top:782px;font-size:26.89px;font-weight:bold;color:#3e4553;font-family:'Liberation Sans',sans-serif;transform:scaleX(0.98);-webkit-text-stroke:0.8px #3e4553;">Marketplaces</span>
<span class="t" style="left:1278.1px;top:782px;font-size:26.89px;font-weight:bold;color:#b4b8bf;font-family:'Liberation Sans',sans-serif;transform:scaleX(0.94);-webkit-text-stroke:0.8px #b4b8bf;">Suppliers</span>
<span class="t" style="left:1158.4px;top:834px;font-size:21.4px;font-weight:normal;color:#15171c;font-family:'Liberation Sans',sans-serif;transform:scaleX(1.01);">temu</span>
<span class="t" style="left:1212.48px;top:837px;font-size:16.7px;font-weight:normal;color:#15171c;font-family:'Liberation Sans',sans-serif;transform:scaleX(1.05);">(94)</span>
<span class="t" style="left:1429.24px;top:833px;font-size:21.8px;font-weight:normal;color:#15171c;font-family:'Liberation Sans',sans-serif;">192 051 PLN</span>
<span class="t" style="left:1156.96px;top:927px;font-size:21.4px;font-weight:normal;color:#15171c;font-family:'Liberation Sans',sans-serif;transform:scaleX(1.07);">bol</span>
<span class="t" style="left:1193.61px;top:930px;font-size:16.7px;font-weight:normal;color:#15171c;font-family:'Liberation Sans',sans-serif;transform:scaleX(1.01);">(1)</span>
<span class="t" style="left:1432.14px;top:926px;font-size:21.8px;font-weight:normal;color:#15171c;font-family:'Liberation Sans',sans-serif;">104 385 PLN</span>
<span class="t" style="left:1157.03px;top:1019px;font-size:21.4px;font-weight:normal;color:#15171c;font-family:'Liberation Sans',sans-serif;transform:scaleX(1.02);">manomano</span>
<span class="t" style="left:1272.99px;top:1022px;font-size:16.7px;font-weight:normal;color:#15171c;font-family:'Liberation Sans',sans-serif;transform:scaleX(1.03);">(5)</span>
<span class="t" style="left:1444.22px;top:1018px;font-size:21.8px;font-weight:normal;color:#15171c;font-family:'Liberation Sans',sans-serif;">83 211 PLN</span>
<span class="t" style="left:1157.73px;top:1111px;font-size:21.4px;font-weight:normal;color:#15171c;font-family:'Liberation Sans',sans-serif;">cdon</span>
<span class="t" style="left:1210.3px;top:1114px;font-size:16.7px;font-weight:normal;color:#15171c;font-family:'Liberation Sans',sans-serif;transform:scaleX(1.02);">(3)</span>
<span class="t" style="left:1439.28px;top:1110px;font-size:21.8px;font-weight:normal;color:#15171c;font-family:'Liberation Sans',sans-serif;">66 256 PLN</span>
<span class="t" style="left:1157.71px;top:1204px;font-size:21.4px;font-weight:normal;color:#15171c;font-family:'Liberation Sans',sans-serif;transform:scaleX(1.03);">amazon</span>
<span class="t" style="left:1241.36px;top:1207px;font-size:16.7px;font-weight:normal;color:#15171c;font-family:'Liberation Sans',sans-serif;transform:scaleX(1.07);">(15)</span>
<span class="t" style="left:1438.58px;top:1203px;font-size:21.8px;font-weight:normal;color:#15171c;font-family:'Liberation Sans',sans-serif;">65 317 PLN</span>
<span class="t" style="left:1157.68px;top:1296px;font-size:21.4px;font-weight:normal;color:#15171c;font-family:'Liberation Sans',sans-serif;transform:scaleX(1.08);">emag</span>
<span class="t" style="left:1221.71px;top:1299px;font-size:16.7px;font-weight:normal;color:#15171c;font-family:'Liberation Sans',sans-serif;transform:scaleX(1.01);">(7)</span>
<span class="t" style="left:1445.26px;top:1295px;font-size:21.8px;font-weight:normal;color:#15171c;font-family:'Liberation Sans',sans-serif;">47 717 PLN</span>
<div class="b" style="left:1088.7px;top:840.3px;width:49.1px;height:32.3px;background:#ef7a30"></div>
<svg class="b" style="left:1088.7px;top:840.3px" width="49.1" height="32.3" viewBox="0 0 49.1 32.3"><g fill="#fff"><rect x="15" y="10" width="3" height="4"/><rect x="20" y="11" width="4" height="3"/><rect x="26" y="10.5" width="3" height="3.5"/><rect x="31" y="10" width="4" height="4"/></g><text x="24.5" y="23" text-anchor="middle" font-family="Liberation Sans" font-weight="bold" font-size="8.5" fill="#fff">TEMU</text></svg>
<svg class="b" style="left:1086px;top:938px" width="56" height="22" viewBox="0 0 56 22"><text x="2.5" y="16" font-family="Liberation Sans" font-weight="bold" font-size="12" letter-spacing="-0.6" fill="#111">bol.com</text><circle cx="49" cy="8" r="3" fill="#4f80e8"/></svg>
<svg class="b" style="left:1088px;top:1032px" width="52" height="18" viewBox="0 0 52 18"><circle cx="8" cy="9" r="5" fill="#3fb39a"/><text x="14" y="12" font-family="Liberation Sans" font-weight="bold" font-style="italic" font-size="6.6" fill="#20467a">ManoMano</text></svg>
<svg class="b" style="left:1098px;top:1118.8px" width="30.8" height="30" viewBox="0 0 30.8 30"><rect width="30.8" height="30" fill="#7fd77f"/><g font-family="Liberation Sans" font-weight="bold" font-size="12.5" fill="#fff" text-anchor="middle"><text x="8.5" y="13.5">C</text><text x="22.5" y="13.5">D</text><text x="8.5" y="27.5">O</text><text x="22.5" y="27.5">N</text></g></svg>
<svg class="b" style="left:1086px;top:1214px" width="56" height="26" viewBox="0 0 56 26"><text x="3" y="17" font-family="Liberation Sans" font-weight="bold" font-size="14" letter-spacing="-0.5" fill="#222">amazon</text><path d="M11 19.5q12 5 24 0" stroke="#e8922f" stroke-width="1.6" fill="none" stroke-linecap="round"/></svg>

<div class="b" style="left:1536.8px;top:7px;width:1023.2px;height:1293px;background:#fff"></div>
<div class="b" style="left:1574.9px;top:44.8px;width:50.8px;height:50.8px;border-radius:50%;background:linear-gradient(90deg,#70c4ec,#4a7fe6)"></div>
<svg class="b" style="left:1585px;top:55px" width="30" height="30" viewBox="0 0 30 30" fill="none" stroke="#fff" stroke-width="1.9" stroke-linejoin="round" stroke-linecap="round"><path d="M15.5 4.5q1.2 8.5 10.8 10.7q-9.6 2.3 -10.8 10.8q-1.2 -8.5 -10.8 -10.8q9.6 -2.2 10.8 -10.7z"/><path d="M24.4 5.5v5M21.9 8h5"/><circle cx="6.9" cy="21.9" r="0.9" fill="#fff"/></svg>
<svg class="b" style="left:1834.4px;top:59px" width="20.6" height="20.4" viewBox="3 1 19.5 20" preserveAspectRatio="none" fill="none" stroke="#3e4553" stroke-width="2" stroke-linecap="round" stroke-linejoin="round"><path d="M12 4H6a2 2 0 0 0 -2 2v12a2 2 0 0 0 2 2h12a2 2 0 0 0 2 -2v-6"/><path d="M18.4 2.6a2.1 2.1 0 0 1 3 3L12 15l-3.6 .9l.9 -3.6z"/></svg>
<svg class="b" style="left:2503px;top:63px" width="8" height="14.2" viewBox="8 5 8 14" preserveAspectRatio="none" fill="none" stroke="#333" stroke-width="2" stroke-linecap="round" stroke-linejoin="round"><path d="M9 6l6 6l-6 6"/></svg>
<div class="b" style="left:1574.8px;top:108px;width:950.7px;height:1.2px;background:#e9e9eb"></div>
<span class="t" style="left:1637.69px;top:60px;font-size:21.44px;font-weight:bold;color:#4f80e8;font-family:'Liberation Sans',sans-serif;transform:scaleX(0.98);-webkit-text-stroke:0.6px #4f80e8;">Base Analytics AI</span>
<svg class="b" style="left:1970px;top:140px" width="160" height="160" viewBox="0 0 1300 1300"><defs><linearGradient id="avg" x1="0" x2="1" y1="0" y2="0"><stop offset="0" stop-color="#72c6ee"/><stop offset="1" stop-color="#467ee2"/></linearGradient><clipPath id="avc"><circle cx="652" cy="670" r="507"/></clipPath></defs><circle cx="650" cy="670" r="545" fill="#f0f3f9"/><circle cx="652" cy="670" r="507" fill="url(#avg)"/><g clip-path="url(#avc)"><path d="M250 1250 L275 960 Q290 860 380 830 L545 735 L760 735 L920 830 Q1010 860 1030 960 L1060 1250 Z" fill="#2a3859"/><path d="M545 760 L650 905 L755 760 L720 1250 L590 1250 Z" fill="#fbfbfb"/><path d="M548 690 L752 690 L755 790 L650 905 L545 790 Z" fill="#e6b08a"/><path d="M545 745 L470 800 L535 1000 L590 1260 L640 1260 L600 900 Z" fill="#35466d"/><path d="M755 745 L835 800 L770 1000 L715 1260 L665 1260 L705 900 Z" fill="#35466d"/><ellipse cx="500" cy="540" rx="24" ry="52" fill="#e2a983"/><ellipse cx="803" cy="540" rx="24" ry="52" fill="#e2a983"/><path d="M522 400 Q525 300 652 298 Q782 300 786 400 L788 570 Q788 705 652 740 Q520 705 518 570 Z" fill="#e9b48e"/><path d="M524 575 Q528 700 652 742 Q778 700 784 575 Q770 640 735 655 Q725 600 652 590 Q580 600 570 655 Q535 640 524 575 Z" fill="#c39677"/><path d="M575 640 Q652 600 728 640 Q700 700 652 705 Q604 700 575 640 Z" fill="#c39677"/><path d="M605 625 Q652 605 700 625 Q690 655 652 658 Q614 655 605 625 Z" fill="#fbf4ee"/><path d="M494 505 Q478 330 565 275 Q652 240 745 268 Q825 300 810 505 L782 505 Q788 420 770 360 Q700 345 652 352 Q590 345 535 362 Q515 420 530 505 Z" fill="#1e1c1f"/><path d="M535 472 Q575 452 622 468" stroke="#1e1c1f" stroke-width="17" fill="none" stroke-linecap="round"/><path d="M680 468 Q728 452 776 472" stroke="#1e1c1f" stroke-width="17" fill="none" stroke-linecap="round"/><g fill="none" stroke="#8a6a58" stroke-width="11"><circle cx="582" cy="522" r="50"/><circle cx="720" cy="522" r="50"/><path d="M632 515 Q651 505 670 515"/><path d="M532 505 L498 495"/><path d="M770 505 L805 495"/></g><circle cx="584" cy="505" r="10" fill="#2b2b2b"/><circle cx="714" cy="505" r="10" fill="#2b2b2b"/></g></svg>
<span class="t" style="left:1989.96px;top:331px;font-size:29.94px;font-weight:bold;color:#4f80e8;font-family:'Liberation Sans',sans-serif;transform:scaleX(0.95);-webkit-text-stroke:1.1px #4f80e8;">Ask Alex</span>
<span class="t" style="left:1890.04px;top:375px;font-size:29.36px;font-weight:bold;color:#3e4553;font-family:'Liberation Sans',sans-serif;transform:scaleX(0.99);-webkit-text-stroke:1.1px #3e4553;">Your intelligent analyst</span>
<div class="b" style="left:1586.6px;top:450.3px;width:926.4px;height:100.7px;background:#f1f5fd;border-radius:16px;box-shadow:0 2px 1px rgba(0,0,0,0.075),0 4px 3px rgba(0,0,0,0.03)"></div>
<svg class="b" style="left:1612.7px;top:486.6px" width="19.6" height="27.4" viewBox="5.1 2.1 13.8 19.8" preserveAspectRatio="none" fill="none" stroke="#3e4553" stroke-width="1.8" stroke-linecap="round" stroke-linejoin="round"><path d="M8.2 13.8a6 6 0 1 1 7.6 0c-.8 .7 -1.2 1.5 -1.2 2.4h-5.2c0 -.9 -.4 -1.7 -1.2 -2.4z"/><path d="M9.6 18.8h4.8"/><path d="M10.4 21h3.2"/></svg>
<span class="t" style="left:1657.7px;top:474px;font-size:22.67px;font-weight:bold;color:#3e4553;font-family:'Liberation Sans',sans-serif;transform:scaleX(0.9);-webkit-text-stroke:0.5px #3e4553;">Tell me</span>
<span class="t" style="left:1657.7px;top:504px;font-size:23.84px;font-weight:normal;color:#555a63;font-family:'Liberation Sans',sans-serif;transform:scaleX(0.89);">What can I ask Base Analytics AI?</span>
<div class="b" style="left:1586.6px;top:569.5px;width:926.4px;height:100.7px;background:#f1f5fd;border-radius:16px;box-shadow:0 2px 1px rgba(0,0,0,0.075),0 4px 3px rgba(0,0,0,0.03)"></div>
<svg class="b" style="left:1607.5px;top:610px" width="29" height="18.5" viewBox="2 6 20 12" preserveAspectRatio="none" fill="none" stroke="#3e4553" stroke-width="2" stroke-linecap="round" stroke-linejoin="round"><path d="M3 17l6 -6l4 4l8 -8"/><path d="M14 7l7 0l0 7"/></svg>
<span class="t" style="left:1657.37px;top:593px;font-size:22.67px;font-weight:bold;color:#3e4553;font-family:'Liberation Sans',sans-serif;transform:scaleX(0.92);-webkit-text-stroke:0.5px #3e4553;">Show</span>
<span class="t" style="left:1656.01px;top:623px;font-size:23.84px;font-weight:normal;color:#555a63;font-family:'Liberation Sans',sans-serif;transform:scaleX(0.91);">My 10 most popular products last month</span>
<div class="b" style="left:1586.6px;top:688.6px;width:926.4px;height:100.7px;background:#f1f5fd;border-radius:16px;box-shadow:0 2px 1px rgba(0,0,0,0.075),0 4px 3px rgba(0,0,0,0.03)"></div>
<svg class="b" style="left:1608.5px;top:727.1px" width="27.5" height="25.5" viewBox="3.1 3.1 17.8 17.8" preserveAspectRatio="none" fill="none" stroke="#3e4553" stroke-width="1.8" stroke-linecap="round" stroke-linejoin="round"><path d="M4 4v16h16"/><path d="M8.5 17v-4"/><path d="M12.5 17v-7.5"/><path d="M16.5 17v-6"/></svg>
<span class="t" style="left:1657.37px;top:712px;font-size:22.67px;font-weight:bold;color:#3e4553;font-family:'Liberation Sans',sans-serif;transform:scaleX(0.93);-webkit-text-stroke:0.5px #3e4553;">Analyze</span>
<span class="t" style="left:1656.02px;top:742px;font-size:23.84px;font-weight:normal;color:#555a63;font-family:'Liberation Sans',sans-serif;transform:scaleX(0.9);">My sales in the last quarter</span>
<div class="b" style="left:1575px;top:1155.9px;width:949.9px;height:65.7px;background:#f2f2f2;border-radius:20px"></div>
<div class="b" style="left:1595px;top:1175.8px;width:1.8px;height:26.7px;background:#3e4553"></div>
<div class="b" style="left:2468px;top:1170.6px;width:36.6px;height:36.6px;border-radius:50%;background:#e9e9e9"></div>
<svg class="b" style="left:2479.5px;top:1180.5px" width="13.5" height="17" viewBox="5.2 4.2 13.6 15.6" preserveAspectRatio="none" fill="none" stroke="#bdbdbd" stroke-width="1.6" stroke-linecap="round" stroke-linejoin="round"><path d="M12 5l0 14"/><path d="M18 11l-6 -6"/><path d="M6 11l6 -6"/></svg>
<span class="t" style="left:1597.5px;top:1180px;font-size:21.08px;font-weight:normal;color:#a9abaf;font-family:'Liberation Sans',sans-serif;transform:scaleX(0.98);">Ask a question...</span>
<span class="t" style="left:1857.5px;top:1238px;font-size:20.93px;font-weight:normal;color:#62666e;font-family:'Liberation Sans',sans-serif;transform:scaleX(0.87);">Answers are for guidance only – worth verifying.</span>
<svg class="b" style="left:0;top:1290px" width="6" height="10" viewBox="0 0 6 10"><polygon points="0,4 4,10 0,10" fill="#3b4a6b"/></svg>
</body></html>
